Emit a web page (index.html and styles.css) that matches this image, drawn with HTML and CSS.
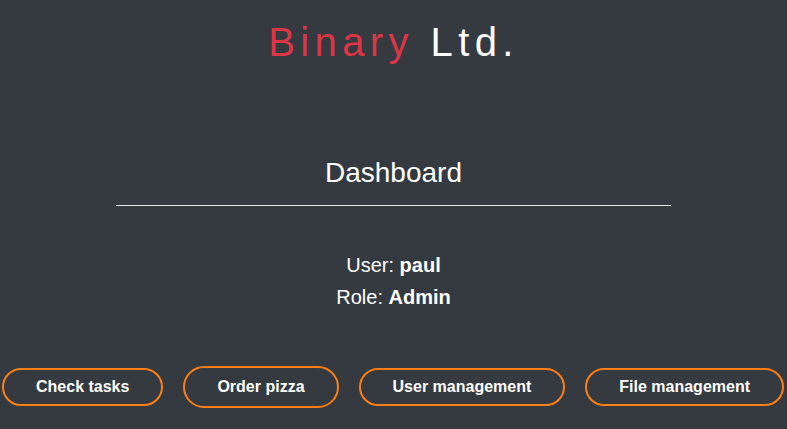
FILE: index.html
```html
<!DOCTYPE html>
<html lang="en">
<head>
<meta charset="utf-8">
<title>Binary Ltd. - Dashboard</title>
<link rel="stylesheet" href="styles.css">
</head>
<body>
  <header class="brand">
    <h1 class="brand-title"><span class="brand-red">Binary</span> Ltd.</h1>
  </header>
  <main class="dashboard">
    <h2 class="dashboard-title">Dashboard</h2>
    <hr class="divider">
    <div class="user-info">
      <p class="info-line">User: <strong>paul</strong></p>
      <p class="info-line">Role: <strong>Admin</strong></p>
    </div>
    <nav class="actions">
      <a class="action-btn" href="#">Check tasks</a>
      <button class="action-btn action-btn--tall" type="button">Order pizza</button>
      <a class="action-btn" href="#">User management</a>
      <a class="action-btn" href="#">File management</a>
    </nav>
  </main>
</body>
</html>
```

FILE: styles.css
```css
* {
  box-sizing: border-box;
}

html, body {
  margin: 0;
  padding: 0;
}

body {
  background: #343a40;
  color: #ffffff;
  font-family: "Liberation Sans", Arial, sans-serif;
  width: 787px;
  height: 429px;
  overflow: hidden;
}

.brand {
  text-align: center;
  padding-top: 18px;
}

.brand-title {
  margin: 0;
  font-size: 40px;
  line-height: 48px;
  font-weight: 400;
  letter-spacing: 5.4px;
  color: #ffffff;
}

.brand-red {
  color: #dc3545;
}

.dashboard {
  display: flex;
  flex-direction: column;
  align-items: center;
  padding-top: 90px;
}

.dashboard-title {
  margin: 0;
  font-size: 28px;
  line-height: 34px;
  font-weight: 400;
}

.divider {
  width: 555px;
  margin: 15px 0 0 0;
  border: 0;
  border-top: 1px solid #e6e6e6;
  height: 0;
}

.user-info {
  margin-top: 43px;
  text-align: center;
}

.info-line {
  margin: 0;
  font-size: 20px;
  line-height: 32px;
}

.info-line strong {
  font-weight: 700;
}

.actions {
  align-self: stretch;
  display: flex;
  justify-content: space-between;
  align-items: center;
  padding: 0 3px 0 2px;
  margin-top: 53px;
}

.action-btn {
  display: inline-block;
  background: transparent;
  color: #ffffff;
  font-family: "Liberation Sans", Arial, sans-serif;
  font-size: 16px;
  line-height: 18px;
  font-weight: 700;
  text-decoration: none;
  padding: 8px 32px;
  border: 2px solid #fd7e14;
  border-radius: 22px;
  cursor: pointer;
  white-space: nowrap;
}

.action-btn--tall {
  padding: 10px 32px;
}
```
